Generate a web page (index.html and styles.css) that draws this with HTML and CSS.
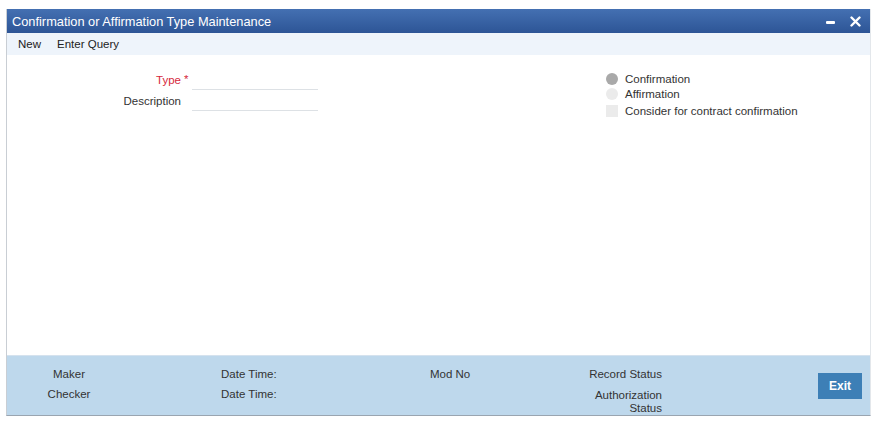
FILE: index.html
```html
<!DOCTYPE html>
<html>
<head>
<meta charset="utf-8">
<link rel="stylesheet" href="styles.css">
</head>
<body>
<div class="window">
  <div class="titlebar">
    <span class="title">Confirmation or Affirmation Type Maintenance</span>
    <div class="controls">
      <span class="min"></span>
      <svg class="close" width="11" height="11" viewBox="0 0 11 11"><path d="M1.5 1.5 L9.5 9.5 M9.5 1.5 L1.5 9.5" stroke="#fff" stroke-width="2.4" stroke-linecap="round"/></svg>
    </div>
  </div>
  <div class="menubar">
    <span class="menu-item">New</span>
    <span class="menu-item">Enter Query</span>
  </div>
  <div class="content">
    <div class="fields">
      <div class="field">
        <label class="lbl req">Type</label>
        <span class="mark">*</span>
        <span class="input"></span>
      </div>
      <div class="field">
        <label class="lbl">Description</label>
        <span class="mark"></span>
        <span class="input"></span>
      </div>
    </div>
    <div class="options">
      <div class="opt"><span class="radio on"></span>Confirmation</div>
      <div class="opt"><span class="radio"></span>Affirmation</div>
      <div class="opt chk"><span class="check"></span>Consider for contract confirmation</div>
    </div>
  </div>
  <div class="footer">
    <div class="col c1"><span>Maker</span><span>Checker</span></div>
    <div class="col c2"><span>Date Time:</span><span>Date Time:</span></div>
    <div class="col c3"><span>Mod No</span></div>
    <div class="col c4"><span>Record Status</span><span class="auth">Authorization<br>Status</span></div>
    <div class="btnwrap"><button class="exit">Exit</button></div>
  </div>
</div>
</body>
</html>
```

FILE: styles.css
```css
html, body {
  margin: 0;
  padding: 0;
  background: #fff;
}
body {
  font-family: "Liberation Sans", Arial, sans-serif;
  font-size: 11.5px;
  color: #333;
  padding: 9px 6px 0 6px;
}
.window {
  width: 865px;
  height: 407px;
  box-sizing: border-box;
  border-left: 1px solid #c9ced4;
  border-right: 1px solid #e3e7eb;
  border-bottom: 1px solid #9aa5b0;
  display: flex;
  flex-direction: column;
}
.titlebar {
  height: 24px;
  background: linear-gradient(#4470b2, #2d5596);
  display: flex;
  align-items: center;
  justify-content: space-between;
  padding: 0 9px 0 5px;
  color: #fff;
  font-size: 12.8px;
  flex: none;
}
.controls {
  display: flex;
  align-items: center;
  gap: 15px;
}
.min {
  width: 9px;
  height: 3px;
  background: #fff;
  border-radius: 1px;
  margin-top: 2px;
}
.close { display: block; }
.menubar {
  height: 22px;
  background: #eef4fb;
  display: flex;
  align-items: center;
  padding-left: 11px;
  gap: 16px;
  flex: none;
  color: #222;
}
.content {
  flex: 1;
  background: #fff;
  display: flex;
  padding-top: 14px;
}
.fields {
  width: 599px;
  display: flex;
  flex-direction: column;
}
.field {
  display: flex;
  align-items: flex-end;
  height: 21px;
}
.lbl {
  width: 174px;
  text-align: right;
  color: #333;
  line-height: 15px;
  padding-bottom: 2px;
}
.lbl.req { color: #d6283b; }
.mark {
  width: 11px;
  color: #d6283b;
  line-height: 15px;
  padding-bottom: 3px;
  padding-left: 3px;
  box-sizing: border-box;
}
.input {
  width: 126px;
  height: 20px;
  box-sizing: border-box;
  border-bottom: 1px solid #dde1e5;
}
.options {
  display: flex;
  flex-direction: column;
  padding-top: 2px;
}
.opt {
  display: flex;
  align-items: center;
  height: 15px;
  color: #333;
}
.opt.chk { height: 16px; margin-top: 2px; }
.radio {
  width: 12px;
  height: 12px;
  border-radius: 50%;
  background: #ebebeb;
  margin-right: 7px;
}
.radio.on { background: #a9a9a9; }
.check {
  width: 12px;
  height: 12px;
  background: #ebebeb;
  margin-right: 7px;
}
.footer {
  height: 60px;
  background: #bed8ec;
  display: flex;
  flex: none;
  border-top: 1px solid #d5e2ee;
  box-sizing: border-box;
}
.col {
  display: flex;
  flex-direction: column;
  padding-top: 11px;
  gap: 6px;
  line-height: 14px;
  white-space: nowrap;
  flex: none;
}
.col.c1 { width: 124px; align-items: center; }
.col.c2 { width: 80px; padding-left: 90px; }
.col.c3 { width: 50px; padding-left: 129px; }
.col.c4 { width: 80px; padding-left: 102px; align-items: flex-end; text-align: right; gap: 8px; }
.auth { line-height: 13px; }
.btnwrap {
  flex: 1;
  display: flex;
  justify-content: flex-end;
  align-items: flex-start;
  padding-top: 17px;
  padding-right: 8px;
}
.exit {
  width: 44px;
  height: 26px;
  background: #3d7fb6;
  color: #fff;
  border: none;
  font-family: "Liberation Sans", Arial, sans-serif;
  font-weight: bold;
  font-size: 12px;
  padding: 0;
}
```
